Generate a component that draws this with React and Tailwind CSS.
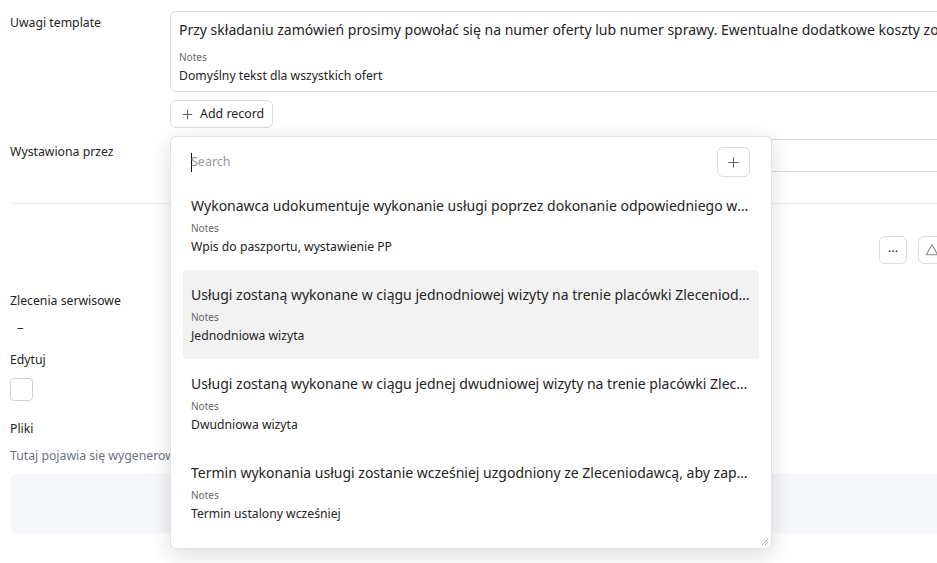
import { Plus } from 'lucide-react';

const font = { fontFamily: '"Noto Sans", "Open Sans", sans-serif' };

const opcje = [
  {
    tytul: 'Wykonawca udokumentuje wykonanie usługi poprzez dokonanie odpowiedniego wpisu w paszporcie technicznym urządzenia',
    notatka: 'Wpis do paszportu, wystawienie PP',
  },
  {
    tytul: 'Usługi zostaną wykonane w ciągu jednodniowej wizyty na trenie placówki Zleceniodawcy w uzgodnionym terminie',
    notatka: 'Jednodniowa wizyta',
    aktywna: true,
  },
  {
    tytul: 'Usługi zostaną wykonane w ciągu jednej dwudniowej wizyty na trenie placówki Zleceniodawcy w uzgodnionym terminie',
    notatka: 'Dwudniowa wizyta',
  },
  {
    tytul: 'Termin wykonania usługi zostanie wcześniej uzgodniony ze Zleceniodawcą, aby zapewnić dostępność urządzeń',
    notatka: 'Termin ustalony wcześniej',
  },
];

function Etykieta({ children, className = '' }) {
  return <div className={`w-[160px] shrink-0 text-[12.25px] leading-[18px] text-[#242424] ${className}`}>{children}</div>;
}

export default function App() {
  return (
    <div style={font} className="relative w-[937px] h-[563px] overflow-hidden bg-white text-[#242424]">
      <div className="px-[10px] pt-[11px]">
        {/* Uwagi template */}
        <div className="flex">
          <Etykieta className="pt-[3px]">Uwagi template</Etykieta>
          <div className="w-[820px] shrink-0">
            <div className="rounded-md border border-[#dcdcdc] px-2 pt-2 pb-[6px]">
              <div className="text-[14px] leading-[20px] whitespace-nowrap">
                Przy składaniu zamówień prosimy powołać się na numer oferty lub numer sprawy. Ewentualne dodatkowe koszty zostaną uzgodnione
              </div>
              <div className="mt-[10px] text-[10px] leading-[14px] text-[#666]">Notes</div>
              <div className="mt-[3px] text-[12.2px] leading-[18px]">Domyślny tekst dla wszystkich ofert</div>
            </div>
            <button className="mt-2 flex h-[28px] items-center gap-[5px] rounded-md border border-[#dcdcdc] bg-white pl-[9px] pr-[8px] text-[12.4px]">
              <Plus size={15} strokeWidth={1.5} className="text-[#555]" />
              Add record
            </button>
          </div>
        </div>

        {/* Wystawiona przez */}
        <div className="mt-[11px] flex">
          <Etykieta className="pt-[4px]">Wystawiona przez</Etykieta>
          <div className="h-[33px] w-[820px] shrink-0 rounded-md border border-[#dcdcdc]" />
        </div>

        <div className="mt-[31px] w-[1000px] border-t border-[#ececec]" />

        <div className="mt-[32px] flex gap-[11px] pl-[869px]">
          <button className="flex h-[28px] w-[28px] shrink-0 items-center justify-center rounded-md border border-[#dcdcdc] text-[13px] leading-none pb-[6px] text-[#333]">
            ...
          </button>
          <button className="flex h-[28px] w-[28px] shrink-0 items-center justify-center rounded-md border border-[#dcdcdc]">
            <svg width="14" height="14" viewBox="0 0 16 16" fill="none" stroke="#888" strokeWidth="1.2">
              <path d="M8 2 L14.5 13.5 H1.5 Z" />
            </svg>
          </button>
        </div>

        <Etykieta className="mt-[28px]">Zlecenia serwisowe</Etykieta>
        <div className="mt-[8px] pl-[7px] text-[13px] leading-[18px]">–</div>

        <Etykieta className="mt-[15px]">Edytuj</Etykieta>
        <div className="mt-[9px] h-[23px] w-[23px] rounded border border-[#d0d0d0]" />

        <Etykieta className="mt-[19px]">Pliki</Etykieta>
        <div className="mt-[9px] text-[12.25px] leading-[18px] text-[#6b7280] whitespace-nowrap">
          Tutaj pojawia się wygenerowany plik oferty
        </div>
        <div className="mt-[9px] h-[59px] w-[1000px] rounded-md bg-[#f6f7fa]" />
      </div>

      {/* Popover wyboru */}
      <div className="absolute left-[170px] top-[136px] w-[602px] rounded-md border border-[#e2e2e2] bg-white pt-[10px] pb-[11px] shadow-[0_6px_22px_rgba(0,0,0,0.14)]">
        <div className="flex items-center justify-between pl-5 pr-[21px]">
          <div className="flex items-center text-[12.5px] text-[#999]">
            <span className="mr-[-1px] h-[19px] w-px bg-[#111]" />
            Search
          </div>
          <button className="flex h-[30px] w-[33px] items-center justify-center rounded-md border border-[#dcdcdc]">
            <Plus size={17} strokeWidth={1.4} className="text-[#666]" />
          </button>
        </div>
        <div className="mt-1 px-3">
          {opcje.map((o) => (
            <div
              key={o.notatka}
              className={`rounded px-2 pt-[15px] pb-[14px] ${o.aktywna ? 'bg-[#f2f2f2]' : ''}`}
            >
              <div className="truncate text-[14px] leading-[20px]">{o.tytul}</div>
              <div className="mt-[5px] text-[10px] leading-[14px] text-[#666]">Notes</div>
              <div className="mt-[3px] text-[12.2px] leading-[18px]">{o.notatka}</div>
            </div>
          ))}
        </div>
        <svg className="absolute bottom-[2px] right-[2px]" width="8" height="8" viewBox="0 0 8 8" stroke="#aaa" strokeWidth="1">
          <path d="M7 1 L1 7 M7 4 L4 7 M7 6.5 L6.5 7" />
        </svg>
      </div>
    </div>
  );
}
